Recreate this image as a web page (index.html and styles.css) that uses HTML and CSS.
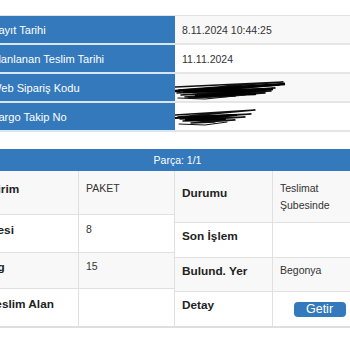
FILE: index.html
```html
<!DOCTYPE html>
<html lang="tr">
<head>
<meta charset="utf-8">
<link rel="stylesheet" href="styles.css">
</head>
<body>
<div class="page">
  <div class="info">
    <div class="lbl">Kayıt Tarihi</div>
    <div class="val odd">8.11.2024 10:44:25</div>
    <div class="lbl">Planlanan Teslim Tarihi</div>
    <div class="val">11.11.2024</div>
    <div class="lbl">Web Sipariş Kodu</div>
    <div class="val odd">
      <svg class="scribble" width="112" height="22" viewBox="0 0 112 22">
        <path d="M0 9 L108 4 L4 12 L104 7 L2 15 L100 10 L6 17 L96 13 L10 19 L90 15 L14 20 L60 18" fill="none" stroke="#111" stroke-width="1.7" stroke-linecap="round" stroke-linejoin="round"/>
        <path d="M0 13 L110 6 L8 14 L98 11 L20 18 L80 16" fill="none" stroke="#000" stroke-width="2.6" stroke-linecap="round"/>
        <path d="M3 20 L30 21 L70 17" fill="none" stroke="#111" stroke-width="1.2" stroke-linecap="round"/>
      </svg>
    </div>
    <div class="lbl">Kargo Takip No</div>
    <div class="val">
      <svg class="scribble" width="85" height="20" viewBox="0 0 85 20">
        <path d="M0 8 L80 3 L3 10 L76 7 L5 12 L70 10 L8 14 L60 13 L16 16 L40 15" fill="none" stroke="#111" stroke-width="1.5" stroke-linecap="round" stroke-linejoin="round"/>
        <path d="M0 11 L62 8 L10 13 L50 12" fill="none" stroke="#000" stroke-width="2.2" stroke-linecap="round"/>
        <path d="M4 17 L30 18 L52 15" fill="none" stroke="#111" stroke-width="1.1" stroke-linecap="round"/>
      </svg>
    </div>
  </div>

  <div class="parca">
    <div class="phead">Parça: 1/1</div>
    <div class="pbody">
      <div class="half left">
        <div class="k g">Birim</div><div class="v g">PAKET</div>
        <div class="k">Desi</div><div class="v">8</div>
        <div class="k g">Kg</div><div class="v g">15</div>
        <div class="k">Teslim Alan</div><div class="v"></div>
      </div>
      <div class="half right">
        <div class="k g">Durumu</div><div class="v g multi">Teslimat Şubesinde</div>
        <div class="k">Son İşlem</div><div class="v"></div>
        <div class="k g">Bulund. Yer</div><div class="v g">Begonya</div>
        <div class="k">Detay</div><div class="v center"><button class="btn">Getir</button></div>
      </div>
    </div>
  </div>
</div>
</body>
</html>
```
FILE: styles.css
```css
html, body {
  margin: 0;
  padding: 0;
  background: #fff;
  overflow: hidden;
}
body {
  font-family: "Liberation Sans", Arial, Helvetica, sans-serif;
  color: #333;
}
.page {
  margin-left: -14px;
  width: 380px;
  padding-top: 15px;
}
.info {
  display: grid;
  grid-template-columns: 189px 191px;
  grid-auto-rows: 29px;
  border-top: 1px solid #e3e3e3;
}
.lbl {
  background: #3479bb;
  color: #fff;
  font-size: 11.1px;
  display: flex;
  align-items: center;
  padding: 0 7px 0 5px;
  border-bottom: 2px solid #d9e6f3;
}
.val {
  background: #fff;
  font-size: 10.5px;
  color: #333;
  display: flex;
  align-items: center;
  padding: 0 7px;
  border-bottom: 2px solid #e6e6e6;
  position: relative;
}
.val.odd { background: #f8f8f8; }
.scribble {
  position: absolute;
  left: 0;
  top: 4px;
}
.parca {
  margin-top: 17px;
  margin-left: -5px;
  border: 1px solid #dedede;
  border-top: none;
}
.phead {
  background: #3479bb;
  color: #fff;
  font-size: 10.5px;
  text-align: center;
  height: 22px;
  line-height: 23px;
  padding-left: 8px;
}
.pbody {
  display: flex;
}
.half {
  display: grid;
}
.left {
  grid-template-columns: 97px 96px;
  grid-template-rows: 44px 38px 36px 38px;
}
.right {
  grid-template-columns: 98px 94px;
  grid-template-rows: 52px 35px 34px 35px;
}
.k, .v {
  display: flex;
  align-items: center;
  padding: 0 7px 8px;
  border-right: 1px solid #e0e0e0;
  border-bottom: 1px solid #e0e0e0;
  background: #fff;
}
.k {
  font-weight: bold;
  font-size: 11.8px;
  color: #222;
}
.v {
  font-size: 10.5px;
  color: #333;
  line-height: 17px;
}
.v.multi { padding-bottom: 0; }
.g { background: #f8f8f8; }
.center { justify-content: center; padding-bottom: 0; }
.btn {
  font-family: inherit;
  width: 52px;
  height: 15px;
  padding: 0;
  border: none;
  border-radius: 4px;
  background: #3479bb;
  color: #fff;
  font-size: 12.5px;
  line-height: 15px;
}
```
